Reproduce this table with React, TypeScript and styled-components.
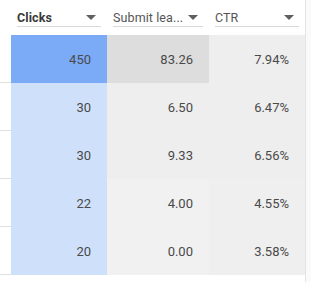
import React from 'react'
import styled, { createGlobalStyle } from 'styled-components'

const GlobalStyle = createGlobalStyle`
    html, body {
        margin: 0;
        padding: 0;
        background: #ffffff;
    }
    body {
        font-family: Roboto, "Liberation Sans", Arial, sans-serif;
    }
`

const columns = [
    { key: 'clicks', title: 'Clicks', bold: true, width: 96 },
    { key: 'leads', title: 'Submit lea...', bold: false, width: 102 },
    { key: 'ctr', title: 'CTR', bold: false, width: 96 },
]

const rows = [
    { clicks: '450', leads: '83.26', ctr: '7.94%', shades: ['#7baaf7', '#dddddd', '#eeeeee'] },
    { clicks: '30', leads: '6.50', ctr: '6.47%', shades: ['#cfe1fa', '#eeeeee', '#eeeeee'] },
    { clicks: '30', leads: '9.33', ctr: '6.56%', shades: ['#cfe1fa', '#eeeeee', '#eeeeee'] },
    { clicks: '22', leads: '4.00', ctr: '4.55%', shades: ['#cfe1fa', '#f1f1f1', '#efefef'] },
    { clicks: '20', leads: '0.00', ctr: '3.58%', shades: ['#cfe1fa', '#f1f1f1', '#efefef'] },
]

export default function App() {
    return (
        <>
            <GlobalStyle />
            <Frame>
                <Table>
                    <HeaderRow>
                        <Gutter />
                        {columns.map((c) => (
                            <HeaderCell key={c.key} $width={c.width}>
                                <HeaderInner>
                                    <HeaderTitle $bold={c.bold}>{c.title}</HeaderTitle>
                                    <Caret />
                                </HeaderInner>
                            </HeaderCell>
                        ))}
                    </HeaderRow>
                    {rows.map((r, i) => (
                        <Row key={i}>
                            <Gutter $line />
                            <Cell $width={96} $bg={r.shades[0]}>{r.clicks}</Cell>
                            <Cell $width={102} $bg={r.shades[1]}>{r.leads}</Cell>
                            <Cell $width={96} $bg={r.shades[2]}>{r.ctr}</Cell>
                        </Row>
                    ))}
                </Table>
                <Track />
            </Frame>
        </>
    )
}

const Frame = styled.div`
    display: flex;
    width: 311px;
    height: 282px;
    background: #ffffff;
`

const Table = styled.div`
    display: flex;
    flex-direction: column;
    width: 305px;
`

const HeaderRow = styled.div`
    display: flex;
    height: 35px;
`

const Row = styled.div`
    display: flex;
    height: 48px;
`

const Gutter = styled.div<{ $line?: boolean }>`
    width: 11px;
    flex: none;
    box-sizing: border-box;
    border-bottom: ${(p) => (p.$line ? '1px solid #e0e0e0' : 'none')};
`

const HeaderCell = styled.div<{ $width: number }>`
    width: ${(p) => p.$width}px;
    flex: none;
    box-sizing: border-box;
    padding: 0 6px;
    display: flex;
    align-items: flex-start;
    padding-top: 8px;
`

const HeaderInner = styled.div`
    flex: 1;
    display: flex;
    align-items: center;
    justify-content: space-between;
    height: 18px;
    border-bottom: 1px solid #dadada;
    padding-right: 5px;
`

const HeaderTitle = styled.span<{ $bold: boolean }>`
    font-size: 12.5px;
    font-weight: ${(p) => (p.$bold ? 700 : 400)};
    color: ${(p) => (p.$bold ? '#3a3a3a' : '#555555')};
    letter-spacing: 0.1px;
    white-space: nowrap;
`

const Caret = styled.span`
    width: 0;
    height: 0;
    border-left: 5px solid transparent;
    border-right: 5px solid transparent;
    border-top: 5px solid #5f5f5f;
`

const Cell = styled.div<{ $width: number; $bg: string }>`
    width: ${(p) => p.$width}px;
    flex: none;
    box-sizing: border-box;
    background: ${(p) => p.$bg};
    display: flex;
    align-items: center;
    justify-content: flex-end;
    padding-right: 16px;
    font-size: 13px;
    color: #4a4a4a;
`

const Track = styled.div`
    flex: 1;
    border-left: 1px solid #e4e4e4;
    background: #fafafa;
`
